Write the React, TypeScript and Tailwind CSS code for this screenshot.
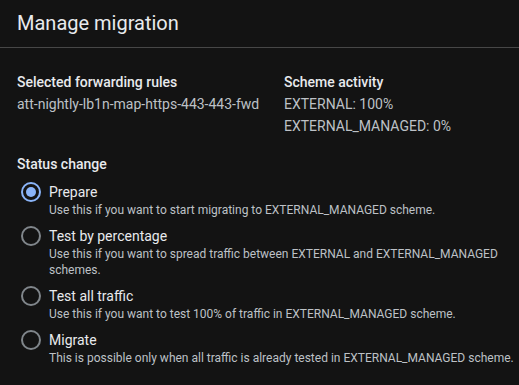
const OPTIONS = [
  {
    label: 'Prepare',
    desc: 'Use this if you want to start migrating to EXTERNAL_MANAGED scheme.',
    checked: true,
  },
  {
    label: 'Test by percentage',
    desc: 'Use this if you want to spread traffic between EXTERNAL and EXTERNAL_MANAGED schemes.',
    checked: false,
  },
  {
    label: 'Test all traffic',
    desc: 'Use this if you want to test 100% of traffic in EXTERNAL_MANAGED scheme.',
    checked: false,
  },
  {
    label: 'Migrate',
    desc: 'This is possible only when all traffic is already tested in EXTERNAL_MANAGED scheme.',
    checked: false,
  },
]

function Radio({ checked }: { checked: boolean }) {
  return (
    <span
      className={`flex h-5 w-5 shrink-0 items-center justify-center rounded-full border-2 ${
        checked ? 'border-[#8ab4f8]' : 'border-[#80868b]'
      }`}
    >
      {checked && <span className="h-2.5 w-2.5 rounded-full bg-[#8ab4f8]" />}
    </span>
  )
}

export default function App() {
  return (
    <div
      className="h-[385px] w-[519px] overflow-hidden bg-[#131313] text-[#e8eaed]"
      style={{ fontFamily: 'Roboto, "Noto Sans", sans-serif' }}
    >
      {/* Header */}
      <div className="flex h-[48px] items-center border-b border-[#474747] px-[17px] pb-[1px]">
        <h2 className="text-[20px] font-normal leading-[28px]">Manage migration</h2>
      </div>

      <div className="pl-[17px] pr-[2px] pt-[23px]">
        {/* Summary */}
        <div className="flex">
          <div className="w-[267px]">
            <div className="text-[14px] font-medium leading-[22px]">Selected forwarding rules</div>
            <div className="text-[14px] leading-[22px] text-[#bdc1c6]">att-nightly-lb1n-map-https-443-443-fwd</div>
          </div>
          <div>
            <div className="text-[14px] font-medium leading-[22px]">Scheme activity</div>
            <div className="text-[14px] leading-[22px] text-[#bdc1c6]">EXTERNAL: 100%</div>
            <div className="text-[14px] leading-[22px] text-[#bdc1c6]">EXTERNAL_MANAGED: 0%</div>
          </div>
        </div>

        {/* Status change */}
        <div className="mt-[16px] text-[14px] font-medium leading-[22px]">Status change</div>
        <div className="mt-[7px] flex flex-col gap-[8px]">
          {OPTIONS.map((o) => (
            <label key={o.label} className="flex gap-[8px] pl-[4px]">
              <Radio checked={o.checked} />
              <div className="min-w-0 flex-1">
                <div className="text-[14px] leading-[20px]">{o.label}</div>
                <div className={`text-[12px] leading-[16px] text-[#bdc1c6] ${o.label === 'Test by percentage' ? 'pr-[14px]' : ''}`}>
                  {o.desc}
                </div>
              </div>
            </label>
          ))}
        </div>
      </div>
    </div>
  )
}
